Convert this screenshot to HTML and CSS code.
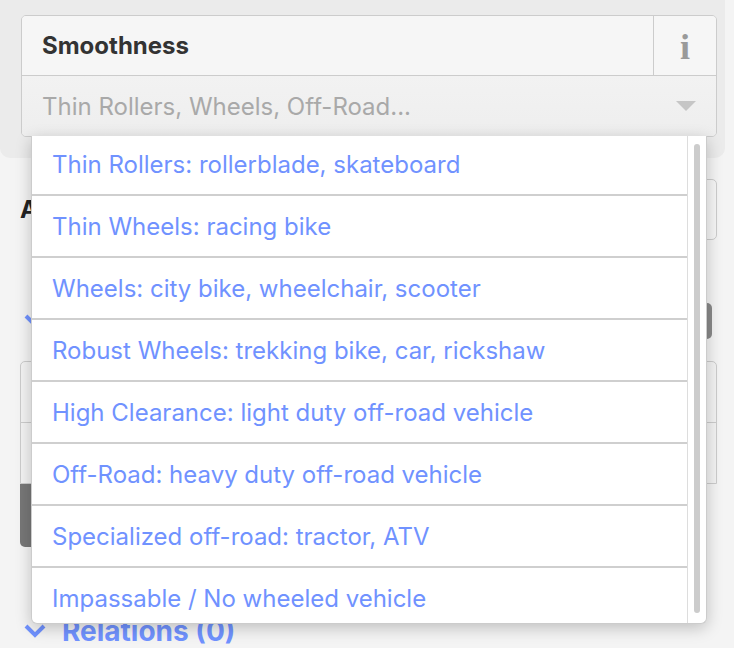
FILE: index.html
```html
<!DOCTYPE html>
<html>
<head>
<meta charset="utf-8">
<link rel="stylesheet" href="styles.css">
</head>
<body>
<div class="app">
  <div class="preset-panel">
    <div class="field">
      <div class="field-head">
        <span class="field-label">Smoothness</span>
        <span class="info-btn">i</span>
      </div>
      <div class="combo">
        <span class="placeholder">Thin Rollers, Wheels, Off-Road...</span>
        <span class="caret"></span>
      </div>
    </div>
  </div>

  <div class="below">
    <div class="row-access">
      <span class="field-label dark">Access</span>
      <div class="access-box"></div>
    </div>
    <div class="section-head tags-head">
      <svg class="chev" width="22" height="16" viewBox="0 0 22 16"><polyline points="2,3 11,12 20,3" fill="none" stroke="#7092ff" stroke-width="4"/></svg>
      <span class="section-title">Tags (3)</span>
      <span class="spacer"></span>
      <span class="view-toggle"></span>
    </div>
    <div class="tag-box">
      <div class="tag-row"></div>
      <div class="tag-row"></div>
    </div>
    <div class="add-btn"></div>
    <div class="section-head rel-head">
      <svg class="chev" width="22" height="16" viewBox="0 0 22 16"><polyline points="2,3 11,12 20,3" fill="none" stroke="#7092ff" stroke-width="4"/></svg>
      <span class="section-title">Relations (0)</span>
    </div>
  </div>

  <div class="dropdown">
    <ul class="options">
      <li class="option">Thin Rollers: rollerblade, skateboard</li>
      <li class="option">Thin Wheels: racing bike</li>
      <li class="option">Wheels: city bike, wheelchair, scooter</li>
      <li class="option">Robust Wheels: trekking bike, car, rickshaw</li>
      <li class="option">High Clearance: light duty off-road vehicle</li>
      <li class="option">Off-Road: heavy duty off-road vehicle</li>
      <li class="option">Specialized off-road: tractor, ATV</li>
      <li class="option">Impassable / No wheeled vehicle</li>
    </ul>
    <div class="scroll-track"><div class="scroll-thumb"></div></div>
  </div>
</div>
</body>
</html>
```
FILE: styles.css
```css
html, body {
  margin: 0;
  padding: 0;
}
body {
  background: #f4f4f4;
  font-family: Inter, "Liberation Sans", Arial, sans-serif;
  width: 734px;
  height: 648px;
  overflow: hidden;
}
.app {
  position: relative;
  width: 734px;
  height: 648px;
}
.preset-panel {
  width: 725px;
  box-sizing: border-box;
  background: #ebebeb;
  padding: 15px 8px 21px 21px;
  border-radius: 0 0 10px 10px;
}
.field {
  border: 1px solid #cccccc;
  border-radius: 5px;
  overflow: hidden;
}
.field-head {
  display: flex;
  height: 59px;
  background: #f6f6f6;
  border-bottom: 1px solid #cccccc;
}
.field-label {
  flex: 1;
  display: flex;
  align-items: center;
  padding-left: 20px;
  font-weight: 700;
  font-size: 24px;
  color: #333333;
}
.info-btn {
  width: 63px;
  border-left: 1px solid #cccccc;
  display: flex;
  align-items: center;
  justify-content: center;
  font-family: "Liberation Serif", "Times New Roman", serif;
  font-weight: 700;
  font-size: 36px;
  color: #9a9a9a;
  padding-top: 2px;
  box-sizing: border-box;
}
.combo {
  display: flex;
  align-items: center;
  height: 60px;
  background: linear-gradient(#f2f2f2, #eeeeee);
  padding: 0 20px 0 20px;
}
.placeholder {
  flex: 1;
  font-size: 24px;
  color: #a9a9a9;
}
.caret {
  width: 0;
  height: 0;
  border-left: 10px solid transparent;
  border-right: 10px solid transparent;
  border-top: 10px solid #c6c6c6;
}
.below {
  padding: 21px 17px 0 20px;
}
.row-access {
  display: flex;
  height: 61px;
  align-items: center;
}
.field-label.dark {
  flex: none;
  padding-left: 0;
  color: #222;
  width: 380px;
  height: 100%;
}
.access-box {
  flex: 1;
  height: 100%;
  box-sizing: border-box;
  border: 1px solid #cccccc;
  border-radius: 5px;
  background: #f6f6f6;
}
.section-head {
  display: flex;
  align-items: center;
  gap: 16px;
  padding-left: 4px;
}
.tags-head {
  margin-top: 63px;
  height: 36px;
}
.section-title {
  font-weight: 700;
  font-size: 28px;
  color: #7092ff;
}
.spacer { flex: 1; }
.view-toggle {
  width: 60px;
  height: 36px;
  background: #8a8a8a;
  border-radius: 5px;
  margin-right: 5px;
}
.tag-box {
  margin-top: 22px;
  border: 1px solid #cccccc;
  border-radius: 5px 5px 0 0;
  background: #f3f3f3;
}
.tag-row {
  height: 60px;
}
.tag-row + .tag-row {
  border-top: 1px solid #cccccc;
}
.add-btn {
  width: 80px;
  height: 63px;
  background: #777777;
  border-radius: 0 0 5px 5px;
}
.rel-head {
  margin-top: 66px;
  height: 36px;
}
.dropdown {
  position: absolute;
  left: 31px;
  top: 136px;
  width: 676px;
  height: 488px;
  box-sizing: border-box;
  background: #ffffff;
  border: 1px solid #cccccc;
  border-top: none;
  border-radius: 0 0 6px 6px;
  box-shadow: 0 4px 16px rgba(0, 0, 0, 0.22);
  display: flex;
  overflow: hidden;
}
.options {
  flex: 1;
  list-style: none;
  margin: -2px 0 0 0;
  padding: 0;
}
.option {
  height: 60px;
  border-bottom: 2px solid #cfcfcf;
  display: flex;
  align-items: center;
  padding-left: 20px;
  font-size: 24px;
  color: #7092ff;
}
.scroll-track {
  width: 18px;
  border-left: 1px solid #dddddd;
  position: relative;
}
.scroll-thumb {
  position: absolute;
  left: 6px;
  top: 8px;
  width: 6px;
  height: 469px;
  border-radius: 3px;
  background: #cccccc;
}
```
